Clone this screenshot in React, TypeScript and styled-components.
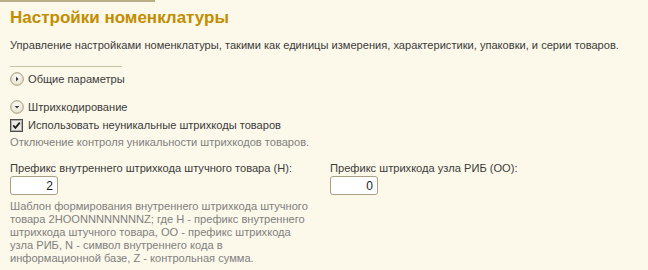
import React from "react";
import styled, { createGlobalStyle } from "styled-components";

const Global = createGlobalStyle`
  html, body { margin: 0; padding: 0; background: #fcf9ea; }
  body { font-family: "Liberation Sans", Arial, sans-serif; font-size: 11.1px; color: #4a4a4a; }
`;

const Page = styled.div`
  width: 648px;
  height: 270px;
  overflow: hidden;
  background: #fcf9ea;
  position: relative;
`;

const TopRule = styled.div`
  width: 155px;
  height: 2px;
  background: #b9ae86;
`;

const Body = styled.div`
  padding: 0 10px;
  display: flex;
  flex-direction: column;
`;

const Title = styled.h1`
  margin: 6px 0 0;
  font-size: 17px;
  line-height: 20px;
  font-weight: bold;
  color: #c28d00;
`;

const Description = styled.p`
  margin: 10px 0 0;
  line-height: 14px;
  color: #3b3b3b;
  white-space: nowrap;
`;

const Separator = styled.div`
  margin-top: 14px;
  width: 112px;
  height: 1px;
  background: #cbc3a6;
`;

const GroupHeader = styled.div<{ $top: number }>`
  margin-top: ${(p) => p.$top}px;
  display: flex;
  align-items: center;
  gap: 4px;
  height: 15px;
  color: #3b3b3b;
`;

const CheckRow = styled.div`
  margin-top: 4px;
  display: flex;
  align-items: center;
  gap: 5px;
  height: 14px;
  color: #3b3b3b;
`;

const Hint = styled.div<{ $top: number; $lh?: number }>`
  margin-top: ${(p) => p.$top}px;
  line-height: ${(p) => p.$lh ?? 14}px;
  color: #808080;
  white-space: nowrap;
`;

const Fields = styled.div`
  margin-top: 12px;
  display: grid;
  grid-template-columns: 320px 1fr;
`;

const Field = styled.div`
  display: flex;
  flex-direction: column;
`;

const Label = styled.div`
  line-height: 14px;
  color: #3b3b3b;
`;

const NumInput = styled.div`
  margin-top: 1px;
  box-sizing: border-box;
  width: 48px;
  height: 19px;
  border: 1px solid #aaa184;
  border-radius: 3px;
  background: #ffffff;
  display: flex;
  align-items: center;
  justify-content: flex-end;
  padding-right: 4px;
  color: #1a1a1a;
  font-size: 12px;
`;

const ToggleIcon = ({ open }: { open: boolean }) => (
  <svg width="14" height="14" viewBox="0 0 14 14">
    <defs>
      <radialGradient id={open ? "go" : "gc"} cx="50%" cy="40%" r="60%">
        <stop offset="0%" stopColor="#ffffff" />
        <stop offset="100%" stopColor="#e6dfc6" />
      </radialGradient>
    </defs>
    <circle cx="7" cy="7" r="6.3" fill={`url(#${open ? "go" : "gc"})`} stroke="#a49c80" strokeWidth="1" />
    {open ? (
      <path d="M4.6 6 L9.4 6 L7 8.6 Z" fill="#3a3a3a" />
    ) : (
      <path d="M6 4.6 L8.6 7 L6 9.4 Z" fill="#3a3a3a" />
    )}
  </svg>
);

const CheckIcon = () => (
  <svg width="13" height="13" viewBox="0 0 13 13">
    <rect x="0.5" y="0.5" width="12" height="12" fill="#ffffff" stroke="#4b4b4b" />
    <rect x="1.5" y="1.5" width="10" height="10" fill="#eceae2" stroke="#6a6a6a" strokeDasharray="1 1" />
    <path d="M3.2 6.4 L5.4 8.8 L9.8 3.6" fill="none" stroke="#1f1f1f" strokeWidth="1.8" />
  </svg>
);

const hintLines = [
  "Шаблон формирования внутреннего штрихкода штучного",
  "товара 2HOONNNNNNNNZ; где Н - префикс внутреннего",
  "штрихкода штучного товара, ОО - префикс штрихкода",
  "узла РИБ, N - символ внутреннего кода в",
  "информационной базе, Z - контрольная сумма.",
];

export default function App() {
  return (
    <Page>
      <Global />
      <TopRule />
      <Body>
        <Title>Настройки номенклатуры</Title>
        <Description>
          Управление настройками номенклатуры, такими как единицы измерения, характеристики, упаковки, и серии товаров.
        </Description>
        <Separator />
        <GroupHeader $top={4}>
          <ToggleIcon open={false} />
          <span>Общие параметры</span>
        </GroupHeader>
        <GroupHeader $top={13}>
          <ToggleIcon open={true} />
          <span>Штрихкодирование</span>
        </GroupHeader>
        <CheckRow>
          <CheckIcon />
          <span>Использовать неуникальные штрихкоды товаров</span>
        </CheckRow>
        <Hint $top={3}>Отключение контроля уникальности штрихкодов товаров.</Hint>
        <Fields>
          <Field>
            <Label>Префикс внутреннего штрихкода штучного товара (Н):</Label>
            <NumInput>2</NumInput>
            <Hint $top={5} $lh={13}>
              {hintLines.map((l, i) => (
                <React.Fragment key={i}>
                  {l}
                  {i < hintLines.length - 1 && <br />}
                </React.Fragment>
              ))}
            </Hint>
          </Field>
          <Field>
            <Label>Префикс штрихкода узла РИБ (ОО):</Label>
            <NumInput>0</NumInput>
          </Field>
        </Fields>
      </Body>
    </Page>
  );
}
